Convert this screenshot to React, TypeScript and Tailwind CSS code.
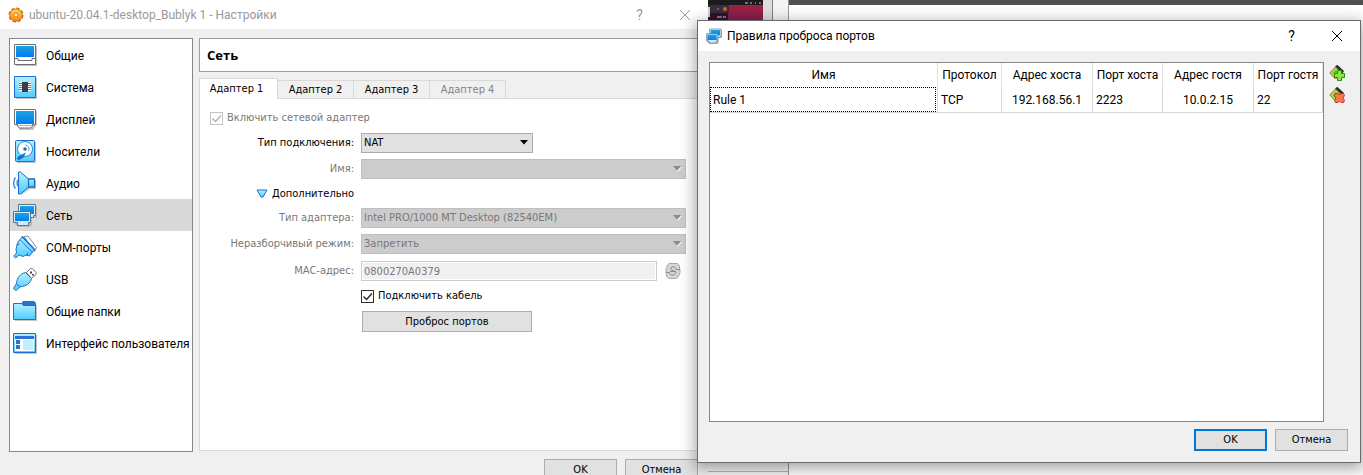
import { useState } from "react";
import type { ReactNode } from "react";

const SEGOE = "font-[Roboto,'Noto_Sans',sans-serif]";
const TAHOMA = "font-['DejaVu_Sans_Condensed','DejaVu_Sans',sans-serif]";

function Gradients() {
  return (
    <svg width="0" height="0" className="absolute" aria-hidden="true">
      <defs>
        <linearGradient id="screen" x1="0" y1="0" x2="0" y2="1">
          <stop offset="0" stopColor="#1fa2dc" />
          <stop offset="1" stopColor="#007df5" />
        </linearGradient>
        <linearGradient id="aqua" x1="0" y1="0" x2="0" y2="1">
          <stop offset="0" stopColor="#b4f0ff" />
          <stop offset="1" stopColor="#4fccff" />
        </linearGradient>
        <linearGradient id="sun" x1="0" y1="0" x2="0" y2="1">
          <stop offset="0" stopColor="#ffd34d" />
          <stop offset="1" stopColor="#f58a1c" />
        </linearGradient>
      </defs>
    </svg>
  );
}

function Icon({ children, size = 24 }: { children: ReactNode; size?: number }) {
  return (
    <svg width={size} height={size} viewBox={`0 0 ${size} ${size}`} fill="none" className="shrink-0" aria-hidden="true">
      {children}
    </svg>
  );
}

const GeneralIcon = () => (
  <Icon>
    <path d="M3 3h21v20H3z" fill="#c4c4c4" />
    <path d="M1.500 1.500h21v20h-21z" fill="#fff" stroke="#6e6e6e" />
    <path d="M3 3h18v11H3z" fill="url(#screen)" />
    <path d="M2 15.500h3v2h14v-2h3" stroke="#6e6e6e" />
  </Icon>
);

const SystemIcon = () => (
  <Icon>
    <path d="M3 3h21v21H3z" fill="#c4c4c4" />
    <path d="M1.500 1.500h21v21h-21z" fill="url(#aqua)" stroke="#1b6fd0" />
    <path d="M6 7.500h12M6 9.500h12M6 11.500h12M6 13.500h12M6 15.500h12" stroke="#fff" />
    <path d="M6 8.500h12M6 10.500h12M6 12.500h12M6 14.500h12" stroke="#5c7f96" />
    <path d="M9 7h6v10H9z" fill="#3a3d45" />
  </Icon>
);

const DisplayIcon = () => (
  <Icon>
    <path d="M3 4h21v14l-3 3v2H6v-2l-3-3z" fill="#c4c4c4" />
    <path d="M1.500 2.500h21v15h-3v1.500l-2 2h-11l-2-2v-1.500h-3z" fill="#fff" stroke="#6e6e6e" />
    <path d="M3 4h18v13H3z" fill="url(#screen)" />
    <path d="M5.500 18.500h13" stroke="#9bb0c4" />
  </Icon>
);

const StorageIcon = () => (
  <Icon>
    <path d="M4 3h19v21H4z" fill="#c4c4c4" />
    <rect x="2.500" y="1.500" width="19" height="21" rx="1" fill="url(#aqua)" stroke="#1b6fd0" />
    <circle cx="12" cy="10" r="7.500" fill="#fff" stroke="#2a86d8" />
    <path d="M12 6a4 4 0 0 1 3.500 6" stroke="#5aa7dc" />
    <circle cx="12" cy="10" r="1.800" fill="#1470cc" />
    <path d="M13 13.500l-3 1.500-5 2.500-1 2.500 2 1 4.500-2.500z" fill="#1470cc" />
  </Icon>
);

const AudioIcon = () => (
  <Icon>
    <path d="M8 3l8 6h7v9h-6l-9 6z" fill="#c4c4c4" />
    <path d="M2.500 6.500c-2.500 3-2.500 8 0 11M5 9c-1.300 1.500-1.300 4.500 0 6" stroke="#2a86d8" strokeWidth="1.300" />
    <path d="M5.500 1h2l8 7v8l-8 7h-2z" fill="url(#aqua)" stroke="#1b6fd0" />
    <path d="M15.500 8h6v8h-6z" fill="url(#aqua)" stroke="#1b6fd0" strokeWidth="1.300" />
  </Icon>
);

const NetworkIcon = ({ size = 24 }: { size?: number }) => (
  <svg width={size} height={size} viewBox="0 0 24 24" fill="none" className="shrink-0" aria-hidden="true">
    <path d="M7 3h17v12h-5v7l-2 2H5l-3-3V10h5z" fill="#b9b9b9" />
    <path d="M5.500 1.500h17v11h-2v2h-13v-2h-2z" fill="#e4f3ff" stroke="#5e7384" />
    <path d="M7 3h14v8H7z" fill="url(#screen)" />
    <path d="M.5 8.500h17v11h-2v3h-11v-3h-4z" fill="#cfe9ff" stroke="#5e7384" />
    <path d="M2 10h14v8H2z" fill="url(#screen)" />
  </svg>
);

const SerialIcon = () => (
  <Icon>
    <path d="M11 1.500l4-.5 8.500 11.500-2 4z" fill="#fff" stroke="#8a8a8a" />
    <path d="M5 7l4.500-5.500 12 13-5 6.500-3.500-1-3 1.500-4-1.500L2.500 23 .8 21l2.700-3-.5-4z" fill="url(#aqua)" stroke="#1b6fd0" />
    <path d="M7 4.500l12.500 13M3.500 10l3-1M15 17.500l-1 3" stroke="#1b6fd0" />
    <path d="M9 1.500l13 13.500" stroke="#1b6fd0" strokeWidth="1.500" />
  </Icon>
);

const UsbIcon = () => (
  <Icon>
    <path d="M13.500 5.500l4-4h2l3.500 4v2l-4.500 4z" fill="#fff" stroke="#777" />
    <path d="M17 4.500h2v2h-2zM19 7h2v1.500h-2z" fill="#444" />
    <path d="M12.500 5.500l6 6c-1 4.500-5 8-11 8L3 23.500l-2.500-2L3.500 16.500c.5-6 4-10 9-11z" fill="url(#aqua)" stroke="#1b6fd0" />
    <path d="M3.500 17l4 3" stroke="#1b6fd0" />
  </Icon>
);

const FolderIcon = () => (
  <Icon>
    <path d="M2 6h22v16H2z" fill="#c4c4c4" />
    <path d="M8 5l2-3h11l2 2v4H8z" fill="#2872d0" />
    <path d="M.5 4.500H8.500l2 2h12V20.500H.5z" fill="url(#aqua)" stroke="#1b6fd0" />
  </Icon>
);

const InterfaceIcon = () => (
  <Icon>
    <path d="M2 4h22v19H2z" fill="#c4c4c4" />
    <path d="M.5 2.500h22v19H.5z" fill="url(#aqua)" stroke="#1b6fd0" />
    <path d="M2 5h19v3H2z" fill="#2872d0" />
    <path d="M2 8h19v12H2z" fill="#fff" />
    <path d="M3 9h4v4H3zM3 14h4v4H3z" fill="#2872d0" />
    <path d="M10 9h10v10H10z" fill="#c4ecff" />
  </Icon>
);

const GearIcon = () => (
  <Icon size={16}>
    <circle cx="8" cy="8" r="6.600" fill="url(#sun)" stroke="#d9690f" strokeWidth="1.800" strokeDasharray="3.400 1.800" />
    <circle cx="8" cy="8" r="6" fill="url(#sun)" stroke="#e27a17" strokeWidth=".8" />
    <circle cx="8" cy="8" r="2" fill="#fff3cf" stroke="#d9690f" strokeWidth=".8" />
  </Icon>
);

const RefreshIcon = () => (
  <Icon size={16}>
    <path d="M4 .5h8.500L14 2l1 5v3l-2 4-2 1.500H4L2 14 1 10V6l1.500-4z" fill="#d6d6d6" stroke="#a8a8a8" />
    <path d="M1 9.500h3.500c0 2 2 3 4 2.500s3-2.500 1.500-3.500L6.500 7C5 6 6 4 7.500 3.800c2-.3 3.500 1 3.500 2.700h4" stroke="#8c8c8c" />
    <path d="M5 8.500h6" stroke="#8c8c8c" />
  </Icon>
);

const RuleIcon = ({ remove = false }: { remove?: boolean }) => (
  <Icon size={16}>
    <path d="M7 .5L8.500 0 15 6l-2 3-7-7z" fill="#2b2f2b" />
    <path d="M6.500 2L.8 8l5.700 6L12.500 8z" fill="#a4e04a" stroke="#b0672b" />
    <path d="M3.500 8l3-3 3 3-3 3z" fill="#5ccb20" />
    {remove ? (
      <path d="M6.500 6.500H9L10.500 8 12 6.500h2.500l1 2L14 11l1.500 2.500-1 2H12L10.500 14 9 15.500H6.500l-1-2L7 11 5.500 8.500z" fill="#f5764f" stroke="#c9341a" />
    ) : (
      <path d="M8.500 5.500h4v3h3v4h-3v3h-4v-3h-3v-4h3z" fill="#8be83c" stroke="#2a8a12" />
    )}
  </Icon>
);

const CloseIcon = () => (
  <Icon size={12}>
    <path d="M1 1l10 10M11 1L1 11" stroke="currentColor" />
  </Icon>
);

const sections = [
  { label: "Общие", icon: <GeneralIcon /> },
  { label: "Система", icon: <SystemIcon /> },
  { label: "Дисплей", icon: <DisplayIcon /> },
  { label: "Носители", icon: <StorageIcon /> },
  { label: "Аудио", icon: <AudioIcon /> },
  { label: "Сеть", icon: <NetworkIcon /> },
  { label: "COM-порты", icon: <SerialIcon /> },
  { label: "USB", icon: <UsbIcon /> },
  { label: "Общие папки", icon: <FolderIcon /> },
  { label: "Интерфейс пользователя", icon: <InterfaceIcon /> },
];

function TitleBar({ icon, title, tone }: { icon: ReactNode; title: string; tone: string }) {
  return (
    <header className={`flex items-center text-xs ${SEGOE} ${tone}`}>
      {icon}
      <h1 className="ml-[5px] grow whitespace-nowrap">{title}</h1>
      <button type="button" aria-label="Справка" className="w-[45px] text-sm">?</button>
      <button type="button" aria-label="Закрыть" className="flex w-[45px] justify-center">
        <CloseIcon />
      </button>
    </header>
  );
}

function PushButton({ children, primary = false }: { children: ReactNode; primary?: boolean }) {
  return (
    <button
      type="button"
      className={`h-[22px] w-[73px] bg-[#e1e1e1] text-[11px] leading-4 ${primary ? "border-2 border-[#0078d7]" : "border border-[#adadad]"}`}
    >
      {children}
    </button>
  );
}

function ComboBox({ id, value, options, disabled = false }: { id: string; value: string; options: string[]; disabled?: boolean }) {
  return (
    <div className={`relative ${disabled ? "w-full" : "w-[172px]"}`}>
      <select
        id={id}
        defaultValue={value}
        disabled={disabled}
        className={`block h-5 w-full appearance-none border px-[2px] leading-4 opacity-100 ${disabled ? "border-[#bfbfbf] bg-[#ccc] text-[#787878]" : "border-[#adadad] bg-[#e1e1e1] text-black"}`}
      >
        {options.map((o) => (
          <option key={o}>{o}</option>
        ))}
      </select>
      <svg width="9" height="6" viewBox="0 0 9 6" className="pointer-events-none absolute top-[7px] right-1" aria-hidden="true">
        {disabled && <path d="M9 1L5 5.500 4 5l4-4z" fill="#fff" />}
        <path d="M0 0h8L4 4.500z" fill={disabled ? "#8c8c8c" : "#000"} />
      </svg>
    </div>
  );
}

function CheckBox({ id, label, disabled = false }: { id: string; label: string; disabled?: boolean }) {
  return (
    <label htmlFor={id} className={`flex items-center gap-1 ${disabled ? "text-[#787878]" : "text-black"}`}>
      <span className="relative flex size-[13px]">
        <input
          id={id}
          type="checkbox"
          defaultChecked
          disabled={disabled}
          className={`peer size-[13px] appearance-none border bg-white ${disabled ? "border-[#c4c4c4]" : "border-[#333]"}`}
        />
        <svg
          width="13"
          height="13"
          viewBox="0 0 13 13"
          fill="none"
          className="pointer-events-none invisible absolute inset-0 peer-checked:visible"
          aria-hidden="true"
        >
          <path d="M2.500 6.500l3 3 5.500-6" stroke={disabled ? "#b0b0b0" : "#222"} strokeWidth="1.300" />
        </svg>
      </span>
      {label}
    </label>
  );
}

function SettingsWindow() {
  const [section, setSection] = useState("Сеть");
  const [tab, setTab] = useState(0);
  return (
    <section className={`absolute top-0 left-0 flex w-[708px] flex-col bg-[#f0f0f0] text-[11px] leading-4 text-black ${TAHOMA}`}>
      <div className="grid h-[29px] bg-white pr-px pl-2">
        <TitleBar icon={<GearIcon />} title="ubuntu-20.04.1-desktop_Bublyk 1 - Настройки" tone="text-[#999]" />
      </div>
      <div className="flex gap-[6px] pt-[9px] pr-[10px] pl-[9px]">
        <nav className={`h-[414px] w-[184px] shrink-0 border border-[#828790] bg-white text-xs ${SEGOE}`}>
          {sections.map((s) => (
            <button
              key={s.label}
              type="button"
              onClick={() => setSection(s.label)}
              className={`flex h-8 w-full items-center gap-[9px] pl-[3px] text-left whitespace-nowrap ${s.label === section ? "bg-[#d9d9d9]" : ""}`}
            >
              {s.icon}
              <span className="pt-px">{s.label}</span>
            </button>
          ))}
        </nav>
        <main className="flex min-w-0 grow flex-col">
          <h2 className="flex h-[34px] items-center border border-[#a0a0a0] bg-white px-[7px] font-['Open_Sans','Noto_Sans',sans-serif] text-[13px] font-bold">{section}</h2>
          <div role="tablist" className="mt-[6px] flex h-5 items-end">
            {["Адаптер 1", "Адаптер 2", "Адаптер 3", "Адаптер 4"].map((t, i) => (
              <button
                key={t}
                type="button"
                role="tab"
                aria-selected={i === tab}
                disabled={i === 3}
                onClick={() => setTab(i)}
                className={`border border-b-0 border-[#d9d9d9] ${i === tab ? "relative z-10 -mb-px h-[21px] w-[79px] bg-white pr-1" : "h-[18px] w-[76px] border-l-0 bg-[#f0f0f0]"} ${i === 3 ? "text-[#838383]" : ""}`}
              >
                {t}
              </button>
            ))}
          </div>
          <div className="flex h-[353px] flex-col border border-[#d9d9d9] bg-white pt-[11px] pr-[11px] pl-[10px]">
            <CheckBox id="enable" label="Включить сетевой адаптер" disabled />
            <div className="mt-[7px] grid grid-cols-[144px_1fr] items-center gap-x-[7px] text-[#787878]">
              <label htmlFor="attach" className="text-right text-black">Тип подключения:</label>
              <ComboBox id="attach" value="NAT" options={["NAT", "Сетевой мост", "Внутренняя сеть"]} />
              <label htmlFor="name" className="mt-[6px] text-right">Имя:</label>
              <div className="mt-[6px]"><ComboBox id="name" value="" options={[""]} disabled /></div>
              <button type="button" className="col-span-2 mt-[7px] mb-[6px] ml-[46px] flex items-center gap-1 justify-self-start text-black">
                <svg width="12" height="10" viewBox="0 0 12 10" aria-hidden="true">
                  <path d="M1 1h10L7 8H5z" fill="url(#aqua)" stroke="#1b6fd0" strokeLinejoin="round" />
                </svg>
                Дополнительно
              </button>
              <label htmlFor="type" className="text-right">Тип адаптера:</label>
              <ComboBox id="type" value="Intel PRO/1000 MT Desktop (82540EM)" options={["Intel PRO/1000 MT Desktop (82540EM)"]} disabled />
              <label htmlFor="mode" className="mt-[6px] text-right">Неразборчивый режим:</label>
              <div className="mt-[6px]"><ComboBox id="mode" value="Запретить" options={["Запретить"]} disabled /></div>
              <label htmlFor="mac" className="mt-[7px] text-right">MAC-адрес:</label>
              <div className="mt-[7px] flex items-center">
                <input
                  id="mac"
                  disabled
                  defaultValue="0800270A0379"
                  className="h-5 min-w-0 grow border border-[#ccc] bg-[#f0f0f0] px-[2px] inset-ring inset-ring-white"
                />
                <button type="button" disabled aria-label="Обновить" className="mr-[5px] ml-2"><RefreshIcon /></button>
              </div>
              <div className="col-start-2 mt-[7px]"><CheckBox id="cable" label="Подключить кабель" /></div>
              <button type="button" className="col-start-2 mt-[7px] ml-px h-[21px] w-[170px] border border-[#adadad] bg-[#e1e1e1] text-black">
                Проброс портов
              </button>
            </div>
          </div>
        </main>
      </div>
      <footer className="flex justify-end gap-2 pt-[7px] pr-[10px] pb-3">
        <PushButton>OK</PushButton>
        <PushButton>Отмена</PushButton>
      </footer>
    </section>
  );
}

function PortRulesDialog() {
  const cell = "h-[26px] border-r border-b border-[#d8d8d8] px-[3px]";
  const head = "h-6 border-r border-[#e0e0e0] font-normal whitespace-nowrap";
  return (
    <section
      role="dialog"
      aria-label="Правила проброса портов"
      className={`absolute top-5 right-[2px] left-[697px] flex flex-col border border-[#6b6b6b] bg-[#f0f0f0] text-black shadow-[0_4px_14px_2px_rgba(0,0,0,0.35)] ${SEGOE}`}
    >
      <div className="grid h-[30px] bg-white pr-px pl-2">
        <TitleBar icon={<NetworkIcon size={16} />} title="Правила проброса портов" tone="text-black" />
      </div>
      <div className="flex gap-[5px] pt-[11px] pr-[15px] pl-[11px]">
        <div className="h-[360px] grow border border-[#828790] bg-white">
          <table className="w-full table-fixed border-separate border-spacing-0 text-xs leading-4">
            <colgroup>
              <col />
              <col className="w-16" />
              <col className="w-[91px]" />
              <col className="w-[70px]" />
              <col className="w-[91px]" />
              <col className="w-[69px]" />
            </colgroup>
            <thead>
              <tr>
                {["Имя", "Протокол", "Адрес хоста", "Порт хоста", "Адрес гостя", "Порт гостя"].map((h) => (
                  <th key={h} scope="col" className={head}>{h}</th>
                ))}
              </tr>
            </thead>
            <tbody>
              <tr>
                <td className="h-[26px] border-r border-b border-[#d8d8d8] p-0">
                  <div className="mr-px h-[25px] border border-dotted border-black px-[2px] leading-6">Rule 1</div>
                </td>
                <td className={cell}>TCP</td>
                <td className={`${cell} text-center`}>192.168.56.1</td>
                <td className={cell}>2223</td>
                <td className={`${cell} text-center`}>10.0.2.15</td>
                <td className={cell}>22</td>
              </tr>
            </tbody>
          </table>
        </div>
        <div className="flex flex-col gap-[6px] pt-[3px]">
          <button type="button" aria-label="Добавить правило"><RuleIcon /></button>
          <button type="button" aria-label="Удалить правило"><RuleIcon remove /></button>
        </div>
      </div>
      <footer className={`flex justify-end gap-2 pt-[7px] pr-3 pb-[11px] ${TAHOMA}`}>
        <PushButton primary>OK</PushButton>
        <PushButton>Отмена</PushButton>
      </footer>
    </section>
  );
}

function Desktop() {
  return (
    <div className="flex h-full pl-[708px]" aria-hidden="true">
      <div className="flex w-[81px] shrink-0 flex-col justify-between border-r border-[#999] bg-[#f4f4f4]">
        <div className="flex h-6">
          <svg width="55" height="24" viewBox="0 0 55 24">
            <defs>
              <linearGradient id="wall" x1="0" y1="0" x2="0" y2="1">
                <stop offset="0" stopColor="#a8243f" />
                <stop offset="1" stopColor="#7a1c50" />
              </linearGradient>
            </defs>
            <path d="M0 0h55v24H0z" fill="url(#wall)" />
            <path d="M0 0h55v5H0z" fill="#1c1a1c" />
            <path d="M0 5h21v8H0z" fill="#37303a" />
            <path d="M0 13h20v11H0z" fill="#34102c" />
            <path d="M0 7h2v10H0z" fill="#d5d0d5" />
            <path d="M37 3h3M42 3h2M47 3h1M51 3h2M9 17h5M15 17h3" stroke="#ccc" />
            <circle cx="10" cy="9" r="1" fill="#77717a" />
            <circle cx="17" cy="9" r="2" fill="#e95a20" />
          </svg>
          <div className="w-[10px] border-r border-[#808080] bg-[#dedede]" />
        </div>
        <div className="h-1 border-t border-[#b8b8b8]" />
      </div>
      <div className="grow border-t-[5px] border-[#4c5053] bg-white" />
    </div>
  );
}

export default function App() {
  return (
    <div className="relative h-screen overflow-hidden bg-white">
      <Gradients />
      <Desktop />
      <SettingsWindow />
      <PortRulesDialog />
    </div>
  );
}
